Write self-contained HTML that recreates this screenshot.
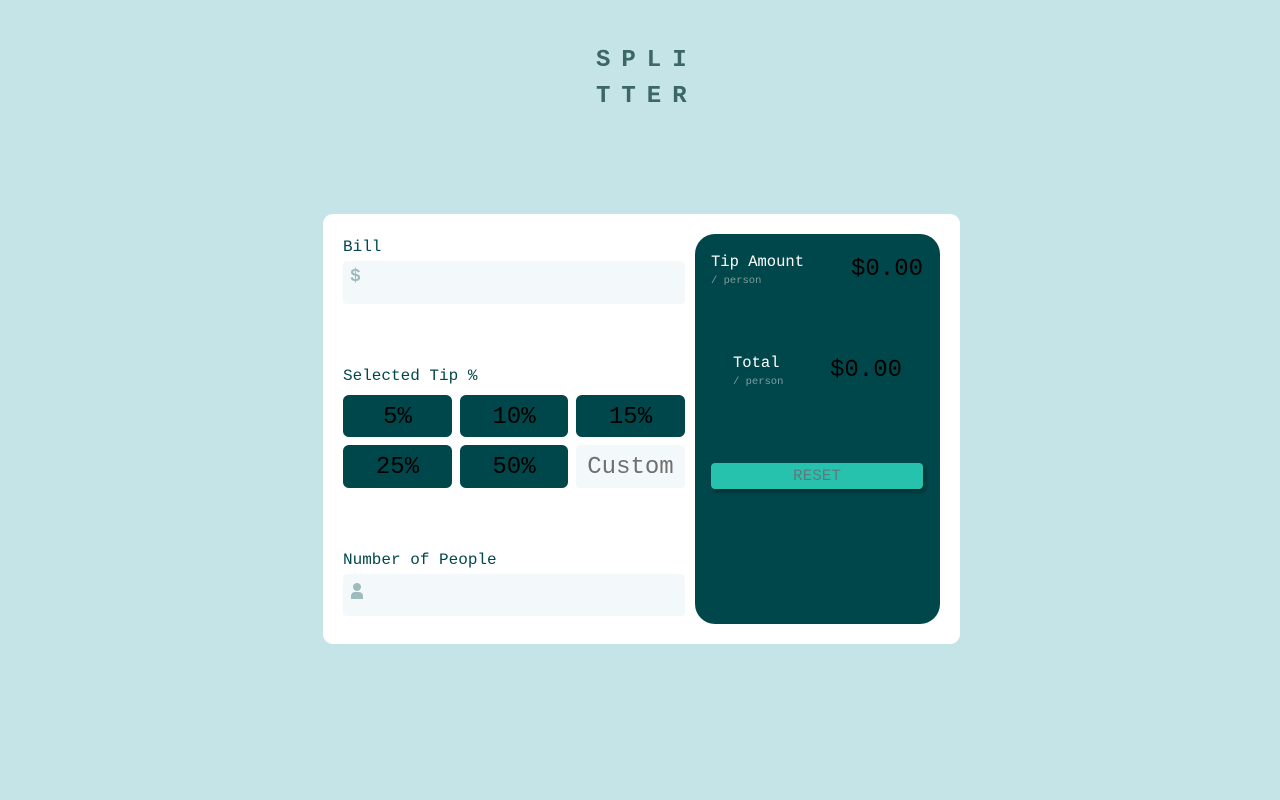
<!DOCTYPE html>
<html><head><meta charset="utf-8"><style>
*{margin:0;padding:0;box-sizing:border-box}
body{width:1280px;height:800px;background:#c5e4e7;font-family:"Liberation Mono",monospace;position:relative;overflow:hidden}
.a{position:absolute}
.logo{left:596px;top:43px;font-size:24px;font-weight:bold;color:#3d6666;letter-spacing:11px;line-height:36px;width:110px}
.card{left:323px;top:214px;width:637px;height:430px;background:#fff;border-radius:10px}
.lbl{font-size:16px;color:#00474b;line-height:20px}
.inp{background:#f3f9fa;border-radius:4px;width:342px;height:43px}
.btn{background:#00474b;border-radius:6px;height:42px;color:#000;font-size:24px;display:flex;align-items:center;justify-content:center;padding-top:2px}
.panel{left:695px;top:234px;width:245px;height:390px;background:#00474b;border-radius:20px}
.w{color:#fff;font-size:15.5px;line-height:20px}
.p{color:#7f9d9f;font-size:10.5px;line-height:14px}
.amt{color:#000;font-size:24px;line-height:30px}
</style></head><body>
<div class="a logo">SPLI<br>TTER</div>
<div class="a card"></div>
<div class="a lbl" style="left:343px;top:237px">Bill</div>
<div class="a inp" style="left:343px;top:261px"></div>
<div class="a" style="left:350px;top:267px;color:#9ebbbd;font-size:18px;font-weight:bold">$</div>
<div class="a lbl" style="left:343px;top:366px">Selected Tip %</div>
<div class="a btn" style="left:343px;top:395px;width:109px">5%</div>
<div class="a btn" style="left:460px;top:395px;width:108px">10%</div>
<div class="a btn" style="left:576px;top:395px;width:109px">15%</div>
<div class="a btn" style="left:343px;top:445px;width:109px;height:43px">25%</div>
<div class="a btn" style="left:460px;top:445px;width:108px;height:43px">50%</div>
<div class="a btn" style="left:576px;top:445px;width:109px;height:43px;background:#f3f9fa;color:#6f6f6f;border-radius:4px">Custom</div>
<div class="a lbl" style="left:343px;top:550px">Number of People</div>
<div class="a inp" style="left:343px;top:574px;height:42px"></div>
<svg class="a" style="left:350px;top:582px" width="14" height="18" viewBox="0 0 14 18"><circle cx="7" cy="5" r="4" fill="#9ebbbd"/><path d="M1 17v-3a4 4 0 0 1 4-4h4a4 4 0 0 1 4 4v3z" fill="#9ebbbd"/></svg>
<div class="a panel"></div>
<div class="a w" style="left:711px;top:252px">Tip Amount</div>
<div class="a p" style="left:711px;top:274px">/ person</div>
<div class="a amt" style="left:851px;top:255px">$0.00</div>
<div class="a w" style="left:733px;top:353px">Total</div>
<div class="a p" style="left:733px;top:375px">/ person</div>
<div class="a amt" style="left:830px;top:356px">$0.00</div>
<div class="a" style="left:711px;top:463px;width:212px;height:26px;background:#26c2ae;border-radius:4px;box-shadow:2px 3px 4px rgba(0,0,0,.35);color:#5e7a7d;font-size:16px;text-align:center;line-height:27px">RESET</div>
</body></html>
